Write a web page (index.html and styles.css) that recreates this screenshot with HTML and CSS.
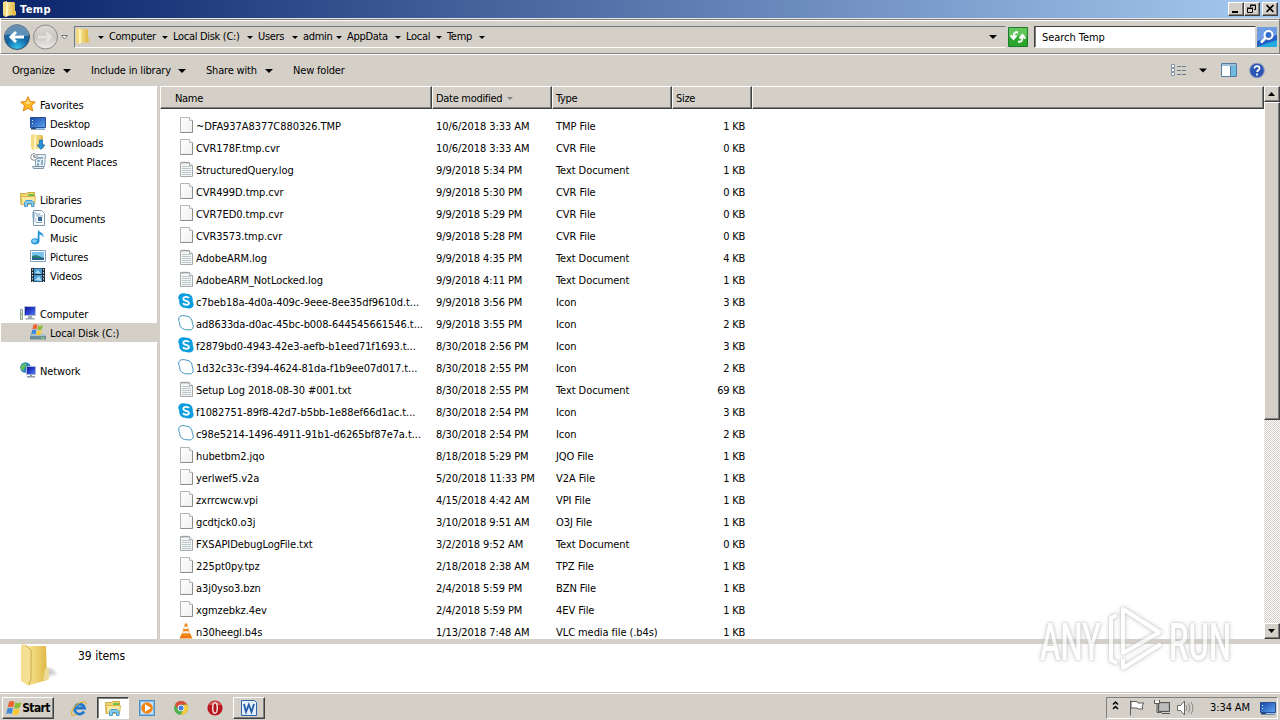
FILE: index.html
```html
<!DOCTYPE html>
<html lang="en">
<head>
<meta charset="utf-8">
<title>Temp</title>
<link rel="stylesheet" href="styles.css">
</head>
<body>
<svg class="defs" width="0" height="0">
  <defs>
    <linearGradient id="gold" x1="0" x2="1"><stop offset="0" stop-color="#fbeaa0"/><stop offset="1" stop-color="#dfb844"/></linearGradient>
    <linearGradient id="paper" x1="0" y1="0" x2="1" y2="1"><stop offset="0" stop-color="#fff"/><stop offset="1" stop-color="#efefef"/></linearGradient>
    <linearGradient id="screen" x1="0" y1="0" x2="1" y2="1"><stop offset="0" stop-color="#1546a8"/><stop offset="1" stop-color="#5fa6ef"/></linearGradient>
    <linearGradient id="dark" x1="0" y1="0" x2="1" y2="1"><stop offset="0" stop-color="#0a1686"/><stop offset=".5" stop-color="#2a3ed0"/><stop offset="1" stop-color="#5a86f0"/></linearGradient>
    <radialGradient id="orb" cx=".5" cy=".95" r=".9"><stop offset="0" stop-color="#37c3ee"/><stop offset=".5" stop-color="#1268a8"/><stop offset="1" stop-color="#2d6592"/></radialGradient>
    <linearGradient id="silver" x1="0" y1="0" x2="0" y2="1"><stop offset="0" stop-color="#dedbd7"/><stop offset=".5" stop-color="#c9c6c2"/><stop offset="1" stop-color="#efedea"/></linearGradient>
    <symbol id="folder" viewBox="0 0 16 16"><path d="M1 1l4-1v15l-2 1-2-2z" fill="#f4dc80"/><path d="M4 1h8l1 1v12l-8 1z" fill="url(#gold)"/><path d="M4 1l2 2v12l-2 1z" fill="#fff3bd"/><path d="M12 10h2v4l-3 1z" fill="#e5c14d"/></symbol>
    <symbol id="file" viewBox="0 0 16 16"><path d="M2.500.5h9l3 3v12h-12z" fill="url(#paper)" stroke="#b5b5b5"/><path d="M2.500 15.500h12v-12" fill="none" stroke="#8d8d8d"/><path d="M11.500.5v3h3" fill="#fff" stroke="#bbb"/></symbol>
    <symbol id="text" viewBox="0 0 16 16"><path d="M2.500 1.500h9l3 3v11h-12z" fill="#f4f6f6" stroke="#a5a9ab"/><path d="M4 .7v2M6 .7v2M8 .7v2M10 .7v2" stroke="#999"/><path d="M4 5.500h9M4 7.500h9M4 9.500h9M4 11.500h9M4 13.500h9" stroke="#bbc7cb"/><path d="M11.500 1.500v3h3" fill="#fff" stroke="#aaa"/></symbol>
    <symbol id="skype" viewBox="0 0 16 16"><path d="M5 .2c2-.2 2 .4 4 .5 4 .3 6 3 5.800 7 0 1.500 1 2 .8 4-.4 3-3 4.400-5.600 3.600-2-.2-3 .2-5-.7C1.700 13 1.100 10.500 1.200 8 1 6.500.1 6 .3 4 .7 1.500 2.500.3 5 .2z" fill="#0a9ede"/><path d="M11 5.200C10.200 3.600 5.500 3.300 5.300 5.700c0 2.700 5.600 1.500 5.600 4.200 0 2.500-5 2.300-5.900.2" fill="none" stroke="#fff" stroke-width="1.800"/></symbol>
    <symbol id="skypeo" viewBox="0 0 16 16"><path d="M4.500.6c1.800-.2 2.500.5 4.300.6 3.500.3 5.500 3 5.400 6.200 0 1.500 1.200 2.500 1.100 4.200-.3 2.700-2.600 3.900-5 3.200-2-.2-3 .2-4.800-.7C2.600 13 1.600 10.700 1.700 8.400 1.600 6.700.5 6 .7 4 1 1.700 2.500.7 4.500.6z" fill="#fff" stroke="#3d93bd"/></symbol>
    <symbol id="vlc" viewBox="0 0 16 16"><path d="M3.500 11h9l2 4.500h-13z" fill="#ef7c12"/><path d="M7 .5h2l3.300 11c-1 1.700-7.500 1.700-8.600 0z" fill="#f28a1c"/><path d="M6.200 3.500h3.600l.8 2.500H5.400zM4.700 8.300h6.600l.6 2H4.100z" fill="#f2f0ee"/></symbol>
    <symbol id="star" viewBox="0 0 16 16"><path d="M8 .7l2.200 4.800 5.200.5-3.900 3.500 1.200 5.400L8 12.200l-4.700 2.700 1.200-5.400L.6 6l5.200-.5z" fill="#fdb827" stroke="#e48413"/><path d="M8 3l1.400 3.400 3 .4-5 1.200-3-1.200 2.200-.4z" fill="#ffe58b"/></symbol>
    <symbol id="desktop" viewBox="0 0 16 16"><path d="M.5 2.500h15v10H.5z" fill="url(#screen)" stroke="#264e91"/><path d="M1 13h14v1.500H1z" fill="#274575"/><path d="M2 5h1v1H2zM2 8h1v1H2z" fill="#dbe9ff"/><path d="M6 13h9v1H6z" fill="#8fc7f5"/></symbol>
    <symbol id="download" viewBox="0 0 16 16"><use href="#folder"/><path d="M9.500 6h3v5h2.500L11 15.500 7 11h2.500z" fill="#2a91dc" stroke="#166bb5" stroke-width=".7"/></symbol>
    <symbol id="recent" viewBox="0 0 16 16"><path d="M5.500 1.500h10l-1 12h-9z" fill="#e9f0f5" stroke="#8ba3b2"/><path d="M7 5h6M7 8h3M12 7v5M8 10v3" stroke="#6e9ab9" stroke-width="1.500"/><path d="M2.500 13.500h11v2h-10z" fill="#dce6ee" stroke="#7e98aa"/><circle cx="4" cy="4" r="3.300" fill="#fff" stroke="#8a9299"/><path d="M4 2v2.200h2" fill="none" stroke="#536069"/></symbol>
    <symbol id="library" viewBox="0 0 16 16"><path d="M.5 2.500h6l1-1h7v12H1z" fill="#f3d774" stroke="#cda943"/><path d="M8 3h6v2H8z" fill="#6ec04a"/><path d="M1 5.500h14.500l-1 8H2z" fill="#fae99f" stroke="#d9b851"/><path d="M4.500 15.500v-4l1.500-2h6l2 2v4h-2.500v-3h-4v3z" fill="#86caee" stroke="#4a9aca"/></symbol>
    <symbol id="document" viewBox="0 0 16 16"><path d="M3.500.5h8l3 3v12h-11z" fill="#fff" stroke="#7895b0"/><path d="M2 3h4M2 5h3M2 7h3M6 4h4M6 6h7M6 12.500h6" stroke="#7ba0c0"/><path d="M8 7h4v4H8z" fill="#386a9e"/><path d="M2.500 9h4M2.500 11h4" stroke="#9ab4cb"/></symbol>
    <symbol id="music" viewBox="0 0 16 16"><path d="M8 .5c1 3 6 3 5.500 8-1-2-2.500-3-4-3v7c-.5 4-8.500 4-8.500 0 0-3 4-4 6.500-2.500z" fill="#2796d9"/><ellipse cx="4.500" cy="12" rx="2.500" ry="1.700" fill="#7ed0f5"/></symbol>
    <symbol id="picture" viewBox="0 0 16 16"><path d="M.5 2.500h15v11H.5z" fill="#fff" stroke="#7fa0bd"/><path d="M2 4h12v8H2z" fill="#7cc3ec"/><path d="M2 8l4-1 8 3v2H2z" fill="#287e76"/><path d="M2 10h12v2H2z" fill="#275e93"/></symbol>
    <symbol id="video" viewBox="0 0 16 16"><path d="M1 1h14v14H1z" fill="#202c38"/><path d="M4 1.500h8V7H4zM4 8h8v6.500H4z" fill="#4a9bd6"/><path d="M5 6l3-3 3 4zM5 13l4-4 3 5z" fill="#a9ddf3"/><path d="M2.500 2v13M13.500 2v13" stroke="#d9e3ea" stroke-dasharray="1.500 1.500"/></symbol>
    <symbol id="computer" viewBox="0 0 16 16"><path d="M.5 4.500h2v10h-2z" fill="#dce8d7" stroke="#8fa08f"/><path d="M1 9h1" stroke="#61a84b"/><path d="M4.500 1.500h11v9h-11z" fill="url(#dark)" stroke="#b4bfd5"/><path d="M8 11h4v2H8zM5.500 13h9v1.500h-9z" fill="#9eaab4"/></symbol>
    <symbol id="disk" viewBox="0 0 16 16"><path d="M2 10h12l2 2v3.500H0V12z" fill="#6f8d99"/><path d="M2 9.500h12l1.500 2.500H.5z" fill="#a9c4ce"/><path d="M11 14h3" stroke="#8af06a"/><use href="#flag" x="1" y="-.5" width="12.500" height="12.500"/></symbol>
    <symbol id="flag" viewBox="0 0 16 16"><path d="M3 2c2-1.500 4-1 5.500 0L7.200 7.500C5.500 6.500 4 6.500 1.700 7.500z" fill="#ee6330"/><path d="M9.300 2.400c2 1 4 .8 6-.4L13.900 7.500c-2 1.200-4 1.200-5.800.4z" fill="#8abc38"/><path d="M1.500 8.400c2-1 4-.9 5.500.1L5.700 14C4 13 2.200 12.800.2 13.900z" fill="#3c8adc"/><path d="M7.900 8.900c2 1 4 .8 5.800-.4L12.400 14c-2 1.200-4 1.200-5.800.4z" fill="#fbc82d"/></symbol>
    <symbol id="network" viewBox="0 0 16 16"><circle cx="5.500" cy="5.500" r="5.300" fill="#2586bd"/><path d="M1 4c2-3 5-3 6-2L5 5 3 9C1 8 0 6 1 4z" fill="#65bd5e"/><path d="M6.500 4.500h9v8h-9z" fill="url(#dark)" stroke="#a6b4cf"/><path d="M10 13h2v1.500h-2zM7 14h8v1.500H7z" fill="#8797a8"/></symbol>
    <symbol id="ie" viewBox="0 0 16 16"><path d="M13 11.500A5 5 0 1 1 13.500 8H4.500" fill="none" stroke="#2079cc" stroke-width="2.800"/><path d="M15 4.500C15.500-1 5 2.500 1.300 10.500c-2.300 5 .7 6 4 3.500" fill="none" stroke="#e5b02e" stroke-width="1.200"/></symbol>
    <symbol id="player" viewBox="0 0 16 16"><path d="M.5.5h15v15H.5z" fill="#7db8e8" stroke="#4a8dcc"/><path d="M2 2h12v12H2z" fill="#cce5f7"/><circle cx="8" cy="8" r="5.800" fill="#f28413"/><path d="M6 4.300L12 8l-6 3.700z" fill="#fff"/></symbol>
    <symbol id="chrome" viewBox="0 0 16 16"><circle cx="8" cy="8" r="7" fill="#52b052"/><path d="M8 1a7 7 0 0 1 6.200 3.800H8L5 9 2 4.500A7 7 0 0 1 8 1z" fill="#df4d3b"/><path d="M14.200 4.800A7 7 0 0 1 7.500 15L11 9V4.800z" fill="#f8cd3c"/><circle cx="8" cy="8" r="3.300" fill="#fff"/><circle cx="8" cy="8" r="2.500" fill="#437fd8"/></symbol>
    <symbol id="opera" viewBox="0 0 16 16"><circle cx="8" cy="8" r="7.600" fill="#b9171f"/><path d="M2 5c2-5 10-5 12 0z" fill="#d9605c"/><ellipse cx="8" cy="8" rx="2.300" ry="5.300" fill="#b3141c" stroke="#f0e2de" stroke-width="1.500"/></symbol>
    <symbol id="word" viewBox="0 0 16 16"><path d="M.5.500h13l2 2v13H.5z" fill="#e5effb" stroke="#2d64ad"/><path d="M3 4l2 8 2.800-7.500L10.500 12 13 4" fill="none" stroke="#245cac" stroke-width="1.800"/></symbol>
    <symbol id="down" viewBox="0 0 8 4"><path d="M0 0h8L4 4z"/></symbol>
  </defs>
</svg>

<main class="window">
  <header class="titlebar">
    <svg class="ico"><use href="#folder"/></svg><h1 class="caption">Temp</h1>
    <div class="controls">
      <button class="raised ctl"><svg width="12" height="10"><path d="M2 8h6" stroke="#000" stroke-width="2"/></svg></button>
      <button class="raised ctl"><svg width="12" height="10"><path d="M4.500 3V1.500h5v4H8M4 1h6M1.500 4.500h5v4h-5zM1 4h6" fill="none" stroke="#000"/></svg></button>
      <button class="raised ctl close"><svg width="12" height="10"><path d="M2.500 1l7 7M9.500 1l-7 7" stroke="#000" stroke-width="1.600"/></svg></button>
    </div>
  </header>

  <nav class="addressbar">
    <svg class="travel" width="72" height="28"><circle cx="17" cy="14" r="12.500" fill="url(#orb)" stroke="#3d5266"/><path d="M5 12a12 12 0 0 1 24 0c-6 3-17-2-24 0z" fill="#fff" opacity=".28"/><path d="M11 14h13M16 9l-5 5 5 5" fill="none" stroke="#fff" stroke-width="3"/><circle cx="45.500" cy="14" r="12" fill="url(#silver)" stroke="#8d8a87"/><path d="M38 14h12M46 9.500l5 4.500-5 4.500" fill="none" stroke="#e5e2de" stroke-width="2.500"/><path d="M61.500 12.500h6l-3 3.500z" fill="#fff" stroke="#777"/></svg>
    <div class="crumbs" id="crumbs"><svg class="ico"><use href="#folder"/></svg></div>
    <svg class="go" width="20" height="20"><path d="M.5.5h19v19H.5z" fill="#2ba52d" stroke="#1a7b2a"/><path d="M1 1h18v8H1z" fill="#62c45b"/><path d="M10 5.500c-3-1-4.500.5-4.500 5M2.500 8.500l3 3.500 3-3.500M10 14.500c3 1 4.500-.5 4.500-5M11.500 11.500l3-3.500 3 3.500" fill="none" stroke="#fff" stroke-width="2"/></svg>
    <div class="search">Search Temp</div>
    <svg class="find" width="20" height="20"><path d="M0 0h20v20H0z" fill="#2560c6"/><path d="M0 0h20v8L0 14z" fill="#6f9de4"/><path d="M0 20l20-7v7z" fill="#24abdf"/><circle cx="11.500" cy="8" r="4" fill="#356ecb" stroke="#fff" stroke-width="2"/><path d="M8.500 11L4 15.500" stroke="#fff" stroke-width="2.500"/></svg>
  </nav>

  <div class="toolbar">
    <span class="menu organize">Organize<svg class="arrow"><use href="#down"/></svg></span>
    <span class="menu include">Include in library<svg class="arrow"><use href="#down"/></svg></span>
    <span class="menu share">Share with<svg class="arrow"><use href="#down"/></svg></span>
    <span class="menu newf">New folder</span>
    <svg class="views" width="100" height="18"><g fill="#fff" stroke="#8393a3"><path d="M1.500 2.500h3v3h-3zM1.500 6.500h3v3h-3zM1.500 10.500h3v3h-3z"/></g><path d="M7 4.500h4m1 0h4M7 8.500h4m1 0h4M7 12.500h4m1 0h4" stroke="#68798f"/><path d="M29 6.500h8l-4 4z"/><path d="M51.500 1.500h15v13h-15z" fill="#fff" stroke="#55799f"/><path d="M52 2h14v2H52z" fill="#9dc0dc"/><path d="M61 4h5v10h-5z" fill="#6fb9df"/><path d="M60.500 4v10" stroke="#55799f"/><circle cx="87" cy="8.500" r="7.300" fill="#2c55b5" stroke="#8d9ab5"/><path d="M84.500 6.500c0-3.500 5.500-3 5 0 0 1.500-2.500 2-2.500 3.500M87 11.500v2" fill="none" stroke="#fff" stroke-width="1.800"/></svg>
  </div>

  <section class="body">
    <aside class="sidebar" id="sidebar"></aside>
    <div class="listing">
      <div class="columns"><span class="col c-name">Name</span><span class="col c-date">Date modified<svg class="sort"><use href="#down"/></svg></span><span class="col c-type">Type</span><span class="col c-size">Size</span><span class="col c-rest"></span></div>
      <div class="rows" id="rows"></div>
    </div>
    <div class="scroll"><button class="raised sb"><svg width="8" height="4"><path d="M0 4h7L3.500 0z"/></svg></button><div class="raised thumb"></div><div class="track"></div><button class="raised sb"><svg width="8" height="4"><path d="M0 0h7L3.500 4z"/></svg></button></div>
  </section>

  <footer class="details"><svg class="big" width="40" height="44"><defs><filter id="soft"><feGaussianBlur stdDeviation="1.500"/></filter></defs><path d="M20 34l17-4-6-6-6 1z" fill="#999" opacity=".5" filter="url(#soft)"/><path d="M6 2h20l1 34-17 5z" fill="url(#gold)"/><path d="M1 1l3-1 7 6v29l-2 7-8-5z" fill="#f4df92"/><path d="M5 1l6 5v29l-2 6" fill="none" stroke="#c9a748"/><path d="M25 25l4-1v11l-6 2z" fill="#edda94"/></svg><span class="count">39 items</span></footer>
</main>

<footer class="taskbar">
  <button class="raised start"><svg class="ico"><use href="#flag"/></svg>Start</button>
  <div class="tasks">
    <span class="task"><svg class="ico"><use href="#ie"/></svg></span>
    <span class="task active"><svg class="ico"><use href="#library"/></svg></span>
    <span class="task"><svg class="ico"><use href="#player"/></svg></span>
    <span class="task"><svg class="ico"><use href="#chrome"/></svg></span>
    <span class="task"><svg class="ico"><use href="#opera"/></svg></span>
    <span class="task raised"><svg class="ico"><use href="#word"/></svg></span>
  </div>
  <div class="tray">
    <svg width="86" height="18"><path d="M2 5.500l2.500-2.500L7 5.500M2 10l2.500-2.500L7 10" fill="none" stroke="#000" stroke-width="1.500"/><path d="M19.500 1.500v15M20 2.500h6l1 1.500h6l-2 3 1 3h-5l-1-1h-6z" fill="#fff" stroke="#5d5d5d"/><path d="M47.500 3.500h11v9h-11z" fill="#aaa" stroke="#555"/><path d="M49 5h8v6h-8z" fill="#bcbcbc"/><path d="M43.500 1v3.500h5V1M46 5v8.500h4.500M51 14.500h8" fill="none" stroke="#555"/><path d="M44 2h4v2h-4z" fill="#fff"/><path d="M66.500 6.500h3l4-4.500v14l-4-4.500h-3z" fill="#fff" stroke="#666"/><path d="M75 6q2 3 0 6M77.500 4.500q3 4.500 0 9M80 3q4 6 0 12" fill="none" stroke="#888"/></svg>
    <span class="clock">3:34 AM</span><svg class="ico"><use href="#desktop"/></svg>
  </div>
</footer>

<svg class="watermark" width="240" height="90">
  <g class="mark">
    <text x="8" y="57" textLength="61" lengthAdjust="spacingAndGlyphs">ANY</text>
    <text x="137" y="57" textLength="62" lengthAdjust="spacingAndGlyphs">RUN</text>
    <path d="M85 12l-6 3v42l6 3M91 6v44l36-20.500zM91 56v9l38-24M91 6l38 24" fill="none" stroke="#fff" stroke-width="4" stroke-linejoin="round"/>
  </g>
</svg>
<script src="app.js"></script>
</body>
</html>
```
FILE: styles.css
```css
* { box-sizing: border-box; }
body { margin: 0; width: 1280px; height: 720px; overflow: hidden; display: flex; flex-direction: column; background: #d4d0c8; color: #000; font: 11px/14px "DejaVu Sans Condensed", "DejaVu Sans", sans-serif; letter-spacing: -0.3px; font-stretch: condensed; white-space: nowrap; position: relative; }
button { font: inherit; letter-spacing: inherit; padding: 0; color: #000; display: flex; align-items: center; justify-content: center; }
.defs { position: absolute; }
.ico { width: 16px; height: 16px; flex: none; display: block; }
.raised { background: #d4d0c8; border: 1px solid; border-color: #fff #404040 #404040 #fff; box-shadow: inset -1px -1px #808080; }
.window { display: flex; flex-direction: column; height: 693px; }
.titlebar { height: 18px; flex: none; display: flex; align-items: center; gap: 2px; padding: 0 2px; background: linear-gradient(90deg, #0a246a, #a6caf0); }
.caption { margin: 0; color: #fff; font-size: 11px; font-weight: bold; letter-spacing: 0.4px; flex: 1; padding-top: 2px; }
.controls { display: flex; }
.ctl { width: 16px; height: 14px; }
.close { margin-left: 2px; }
.addressbar { height: 36px; flex: none; display: flex; align-items: center; padding: 2px 2px 0 0; border: 1px solid; border-color: #e8e5e0 #808080 #808080 #fff; box-shadow: inset 0 1px #808080, inset 0 2px #fff; }
.travel { flex: none; margin-left: -1px; }
.crumbs { width: 932px; height: 22px; flex: none; display: flex; align-items: center; border: 1px solid; border-color: #6e7b80 #d4d0c8 #fff #6e7b80; margin-left: 2px; }
.crumbs .ico { margin-bottom: 2px; }
.crumb { display: flex; align-items: center; justify-content: space-between; flex: none; margin-right: 5px; }
.crumb-root { width: 14px; justify-content: flex-end; margin-left: -1px; }
.crumb-arrow { width: 6px; height: 3px; }
.drop { width: 8px; height: 4px; margin-left: auto; margin-right: 8px; }
.go { margin-left: 2px; }
.search { width: 222px; height: 22px; flex: none; margin-left: 6px; background: #fff; border: 1px solid; border-color: #404040 #d4d0c8 #fff #404040; box-shadow: inset 1px 0 #808080; padding: 4px 7px; letter-spacing: -0.05px; }
.find { margin-left: 1px; }
.toolbar { height: 32px; flex: none; display: flex; align-items: center; padding: 0 10px 0 12px; border-top: 1px solid #fff; letter-spacing: -0.18px; }
.menu { display: flex; align-items: center; justify-content: space-between; flex: none; }
.arrow { width: 8px; height: 4px; }
.organize { width: 59px; margin-right: 20px; }
.include { width: 95px; margin-right: 20px; }
.share { width: 67px; margin-right: 20px; }
.views { margin-left: auto; }
.body { height: 553px; flex: none; display: flex; background: #fff; }
.sidebar { width: 160px; flex: none; border-right: 3px solid #d4d0c8; padding: 9px 0 0 1px; letter-spacing: -0.12px; }
.place { height: 19px; display: flex; align-items: center; padding-left: 19px; gap: 4px; }
.place span { padding-top: 2px; }
.place .ico { margin-bottom: 2px; }
.place.child { padding-left: 29px; }
.place.selected { background: #d4d0c8; margin-right: -3px; }
.place.blank { visibility: hidden; }
.listing { flex: 1; overflow: hidden; display: flex; flex-direction: column; }
.columns { height: 23px; flex: none; display: flex; }
.col { background: #d4d0c8; border: 1px solid; border-color: #fff #404040 #404040 #fff; box-shadow: inset -1px -1px #808080; display: flex; align-items: center; flex: none; padding-top: 2px; }
.c-name { width: 272px; padding-left: 14px; }
.c-date, .c-type, .c-size { width: 120px; padding-left: 3px; }
.c-size { width: 80px; }
.c-rest { flex: 1; }
.sort { width: 6px; height: 3px; margin-left: 5px; fill: #808080; }
.rows { padding-top: 6px; letter-spacing: -0.07px; }
.row { height: 22px; display: grid; grid-template-columns: 276px 120px 120px 69px; align-items: center; }
.row > span, .name > span { padding-top: 2px; }
.row > .name { display: flex; align-items: center; padding: 0 0 0 18px; gap: 2px; }
.name .ico { margin-bottom: 2px; }
.size { text-align: right; letter-spacing: -0.25px; }
.scroll { width: 16px; flex: none; display: flex; flex-direction: column; }
.sb { height: 16px; width: 16px; flex: none; }
.thumb { height: 318px; flex: none; }
.track { flex: 1; background: repeating-conic-gradient(#fff 0 25%, #d4d0c8 0 50%) 0 0 / 2px 2px; }
.details { flex: 1; display: flex; background: #fff; border-top: 5px solid #d4d0c8; border-bottom: 1px solid #c8c8bc; padding-left: 20px; }
.count { font-size: 12px; padding: 5px 0 0 18px; letter-spacing: 0; }
.big { flex: none; }
.taskbar { height: 27px; flex: none; display: flex; align-items: center; background: #d4d0c8; border-top: 1px solid #fff; padding: 1px 2px 0; }
.start { width: 52px; height: 22px; font-weight: bold; font-size: 12px; letter-spacing: -0.6px; }
.tasks { display: flex; margin-left: 9px; gap: 2px; }
.task { width: 32px; height: 22px; display: flex; align-items: center; justify-content: center; }
.task.active { background: #fff; border: 1px solid; border-color: #404040 #fff #fff #404040; box-shadow: inset 1px 1px #808080; }
.tray { margin-left: auto; height: 22px; width: 172px; border: 1px solid; border-color: #808080 #fff #fff #808080; display: flex; align-items: center; padding-left: 4px; }
.clock { width: 50px; margin-left: 13px; letter-spacing: -0.1px; }
.watermark { position: absolute; left: 1032px; top: 603px; opacity: .75; pointer-events: none; }
.mark { filter: drop-shadow(0 0 1px #b0b0b0) drop-shadow(0 0 2px #ccc); }
.mark text { font: 500 51px Roboto, sans-serif; fill: #fff; letter-spacing: 0; }
```
FILE: app.js
```js
const icon = (name, cls = "ico") => `<svg class="${cls}"><use href="#${name}"/></svg>`;

// Each crumb: label and the width of label plus its arrow.
const crumbs = [["Computer", 59], ["Local Disk (C:)", 80], ["Users", 40], ["admin", 39], ["AppData", 54], ["Local", 36], ["Temp", 38]];
document.getElementById("crumbs").innerHTML += `<span class="crumb crumb-root">${icon("down", "crumb-arrow")}</span>` +
  crumbs.map(([t, w]) => `<span class="crumb" style="width:${w}px">${t}${icon("down", "crumb-arrow")}</span>`).join("") + icon("down", "drop");

const places = [
  ["star", "Favorites"], ["desktop", "Desktop", 1], ["download", "Downloads", 1], ["recent", "Recent Places", 1], null,
  ["library", "Libraries"], ["document", "Documents", 1], ["music", "Music", 1], ["picture", "Pictures", 1], ["video", "Videos", 1], null,
  ["computer", "Computer"], ["disk", "Local Disk (C:)", 1, 1], null, ["network", "Network"]
];
document.getElementById("sidebar").innerHTML = places.map(p => p
  ? `<div class="place${p[2] ? " child" : ""}${p[3] ? " selected" : ""}">${icon(p[0])}<span>${p[1]}</span></div>`
  : `<div class="place blank"></div>`).join("");

const files = [
  ["file", "~DFA937A8377C880326.TMP", "10/6/2018 3:33 AM", "TMP File", "1 KB"],
  ["file", "CVR178F.tmp.cvr", "10/6/2018 3:33 AM", "CVR File", "0 KB"],
  ["text", "StructuredQuery.log", "9/9/2018 5:34 PM", "Text Document", "1 KB"],
  ["file", "CVR499D.tmp.cvr", "9/9/2018 5:30 PM", "CVR File", "0 KB"],
  ["file", "CVR7ED0.tmp.cvr", "9/9/2018 5:29 PM", "CVR File", "0 KB"],
  ["file", "CVR3573.tmp.cvr", "9/9/2018 5:28 PM", "CVR File", "0 KB"],
  ["text", "AdobeARM.log", "9/9/2018 4:35 PM", "Text Document", "4 KB"],
  ["text", "AdobeARM_NotLocked.log", "9/9/2018 4:11 PM", "Text Document", "1 KB"],
  ["skype", "c7beb18a-4d0a-409c-9eee-8ee35df9610d.t...", "9/9/2018 3:56 PM", "Icon", "3 KB"],
  ["skypeo", "ad8633da-d0ac-45bc-b008-644545661546.t...", "9/9/2018 3:55 PM", "Icon", "2 KB"],
  ["skype", "f2879bd0-4943-42e3-aefb-b1eed71f1693.t...", "8/30/2018 2:56 PM", "Icon", "3 KB"],
  ["skypeo", "1d32c33c-f394-4624-81da-f1b9ee07d017.t...", "8/30/2018 2:55 PM", "Icon", "2 KB"],
  ["text", "Setup Log 2018-08-30 #001.txt", "8/30/2018 2:55 PM", "Text Document", "69 KB"],
  ["skype", "f1082751-89f8-42d7-b5bb-1e88ef66d1ac.t...", "8/30/2018 2:54 PM", "Icon", "3 KB"],
  ["skypeo", "c98e5214-1496-4911-91b1-d6265bf87e7a.t...", "8/30/2018 2:54 PM", "Icon", "2 KB"],
  ["file", "hubetbm2.jqo", "8/18/2018 5:29 PM", "JQO File", "1 KB"],
  ["file", "yerlwef5.v2a", "5/20/2018 11:33 PM", "V2A File", "1 KB"],
  ["file", "zxrrcwcw.vpi", "4/15/2018 4:42 AM", "VPI File", "1 KB"],
  ["file", "gcdtjck0.o3j", "3/10/2018 9:51 AM", "O3J File", "1 KB"],
  ["text", "FXSAPIDebugLogFile.txt", "3/2/2018 9:52 AM", "Text Document", "0 KB"],
  ["file", "225pt0py.tpz", "2/18/2018 2:38 AM", "TPZ File", "1 KB"],
  ["file", "a3j0yso3.bzn", "2/4/2018 5:59 PM", "BZN File", "1 KB"],
  ["file", "xgmzebkz.4ev", "2/4/2018 5:59 PM", "4EV File", "1 KB"],
  ["vlc", "n30heegl.b4s", "1/13/2018 7:48 AM", "VLC media file (.b4s)", "1 KB"]
];
document.getElementById("rows").innerHTML = files.map(([i, n, d, t, s]) =>
  `<div class="row"><span class="name">${icon(i)}<span>${n}</span></span><span>${d}</span><span>${t}</span><span class="size">${s}</span></div>`).join("");
```
